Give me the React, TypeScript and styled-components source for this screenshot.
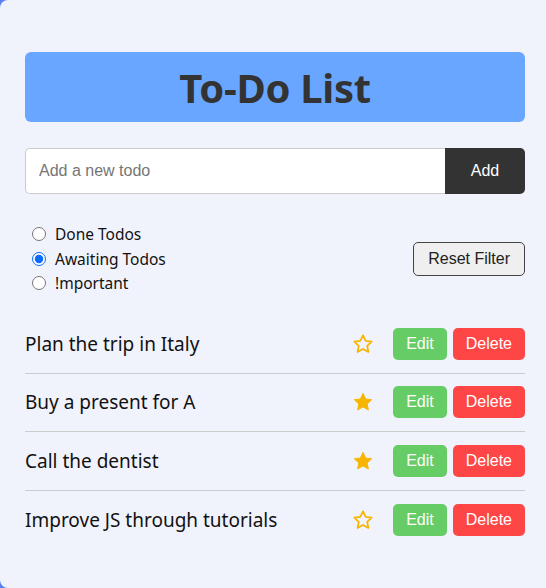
import { useState } from "react";
import styled, { createGlobalStyle } from "styled-components";

const GlobalStyle = createGlobalStyle`
  html, body {
    margin: 0;
    padding: 0;
    background: #5b7ff2;
  }
  * {
    box-sizing: border-box;
  }
`;

type Todo = { id: number; text: string; important: boolean };

const initialTodos: Todo[] = [
  { id: 1, text: "Plan the trip in Italy", important: false },
  { id: 2, text: "Buy a present for A", important: true },
  { id: 3, text: "Call the dentist", important: true },
  { id: 4, text: "Improve JS through tutorials", important: false },
];

function Star({ filled }: { filled: boolean }) {
  return (
    <svg width="22" height="22" viewBox="0 0 24 24">
      <path
        d="M12 2.6l2.9 6.1 6.6.8-4.9 4.6 1.3 6.6L12 17.4l-5.9 3.3 1.3-6.6-4.9-4.6 6.6-.8z"
        fill={filled ? "#f7b500" : "none"}
        stroke="#f7b500"
        strokeWidth={filled ? 1 : 1.9}
        strokeLinejoin="round"
      />
    </svg>
  );
}

export default function App() {
  const [todos, setTodos] = useState(initialTodos);
  const [filter, setFilter] = useState("awaiting");

  const toggle = (id: number) =>
    setTodos(todos.map((t) => (t.id === id ? { ...t, important: !t.important } : t)));

  return (
    <>
      <GlobalStyle />
      <Container>
        <Header>To-Do List</Header>
        <AddForm onSubmit={(e) => e.preventDefault()}>
          <TodoInput placeholder="Add a new todo" />
          <AddButton type="submit">Add</AddButton>
        </AddForm>
        <FilterBar>
          <RadioGroup>
            {[
              ["done", "Done Todos"],
              ["awaiting", "Awaiting Todos"],
              ["important", "!mportant"],
            ].map(([value, label]) => (
              <RadioLabel key={value}>
                <input
                  type="radio"
                  name="filter"
                  checked={filter === value}
                  onChange={() => setFilter(value)}
                />
                {label}
              </RadioLabel>
            ))}
          </RadioGroup>
          <ResetButton onClick={() => setFilter("")}>Reset Filter</ResetButton>
        </FilterBar>
        <List>
          {todos.map((todo) => (
            <Row key={todo.id}>
              <TodoText>{todo.text}</TodoText>
              <StarButton onClick={() => toggle(todo.id)}>
                <Star filled={todo.important} />
              </StarButton>
              <ActionButton $variant="edit">Edit</ActionButton>
              <ActionButton $variant="delete">Delete</ActionButton>
            </Row>
          ))}
        </List>
      </Container>
    </>
  );
}

const Container = styled.div`
  min-height: 588px;
  width: 560px;
  background: #f1f3fc;
  border-radius: 8px;
  padding: 52px 0 0 25px;
  font-family: "Noto Sans", sans-serif;
`;

const Header = styled.h1`
  width: 500px;
  height: 70px;
  margin: 0 0 26px;
  background: #69a6ff;
  border-radius: 6px;
  display: flex;
  align-items: center;
  justify-content: center;
  color: #333;
  font-size: 40px;
  font-weight: 700;
  letter-spacing: -0.3px;
`;

const AddForm = styled.form`
  display: flex;
  width: 500px;
  height: 46px;
`;

const TodoInput = styled.input`
  flex: 1;
  border: 1px solid #ccc;
  border-right: none;
  border-radius: 5px 0 0 5px;
  padding: 0 13px;
  font-family: "Liberation Sans", Arial, sans-serif;
  font-size: 16px;
  outline: none;
  &::placeholder {
    color: #757575;
  }
`;

const AddButton = styled.button`
  width: 80px;
  border: none;
  border-radius: 0 5px 5px 0;
  background: #333;
  color: #fff;
  font-family: "Liberation Sans", Arial, sans-serif;
  font-size: 16px;
`;

const FilterBar = styled.div`
  width: 500px;
  display: flex;
  align-items: center;
  justify-content: space-between;
  margin-top: 30px;
`;

const RadioGroup = styled.div`
  display: flex;
  flex-direction: column;
  gap: 4.5px;
  padding-left: 2px;
`;

const RadioLabel = styled.label`
  display: flex;
  align-items: center;
  gap: 9px;
  height: 20px;
  font-size: 15.5px;
  color: #111;
  input {
    margin: 0 0 0 5px;
    width: 14px;
    height: 14px;
    accent-color: #0a6cff;
  }
`;

const ResetButton = styled.button`
  height: 34px;
  padding: 0 14px;
  border: 1px solid #444;
  border-radius: 5px;
  background: #efefef;
  color: #222;
  font-family: "Liberation Sans", Arial, sans-serif;
  font-size: 16px;
`;

const List = styled.ul`
  list-style: none;
  margin: 22px 0 0;
  padding: 0;
  width: 500px;
`;

const Row = styled.li`
  display: flex;
  align-items: center;
  height: 58.5px;
  border-bottom: 1px solid #ccc;
  &:last-child {
    border-bottom: none;
  }
`;

const TodoText = styled.span`
  flex: 1;
  font-size: 19px;
  color: #111;
`;

const StarButton = styled.button`
  display: flex;
  background: none;
  border: none;
  padding: 0;
  margin-right: 19px;
  cursor: pointer;
`;

const ActionButton = styled.button<{ $variant: "edit" | "delete" }>`
  height: 32px;
  padding: 0 13px;
  margin-left: ${(p) => (p.$variant === "delete" ? "6px" : "0")};
  border: none;
  border-radius: 5px;
  background: ${(p) => (p.$variant === "edit" ? "#66cc66" : "#ff4646")};
  color: #fff;
  font-family: "Liberation Sans", Arial, sans-serif;
  font-size: 16px;
  cursor: pointer;
`;
